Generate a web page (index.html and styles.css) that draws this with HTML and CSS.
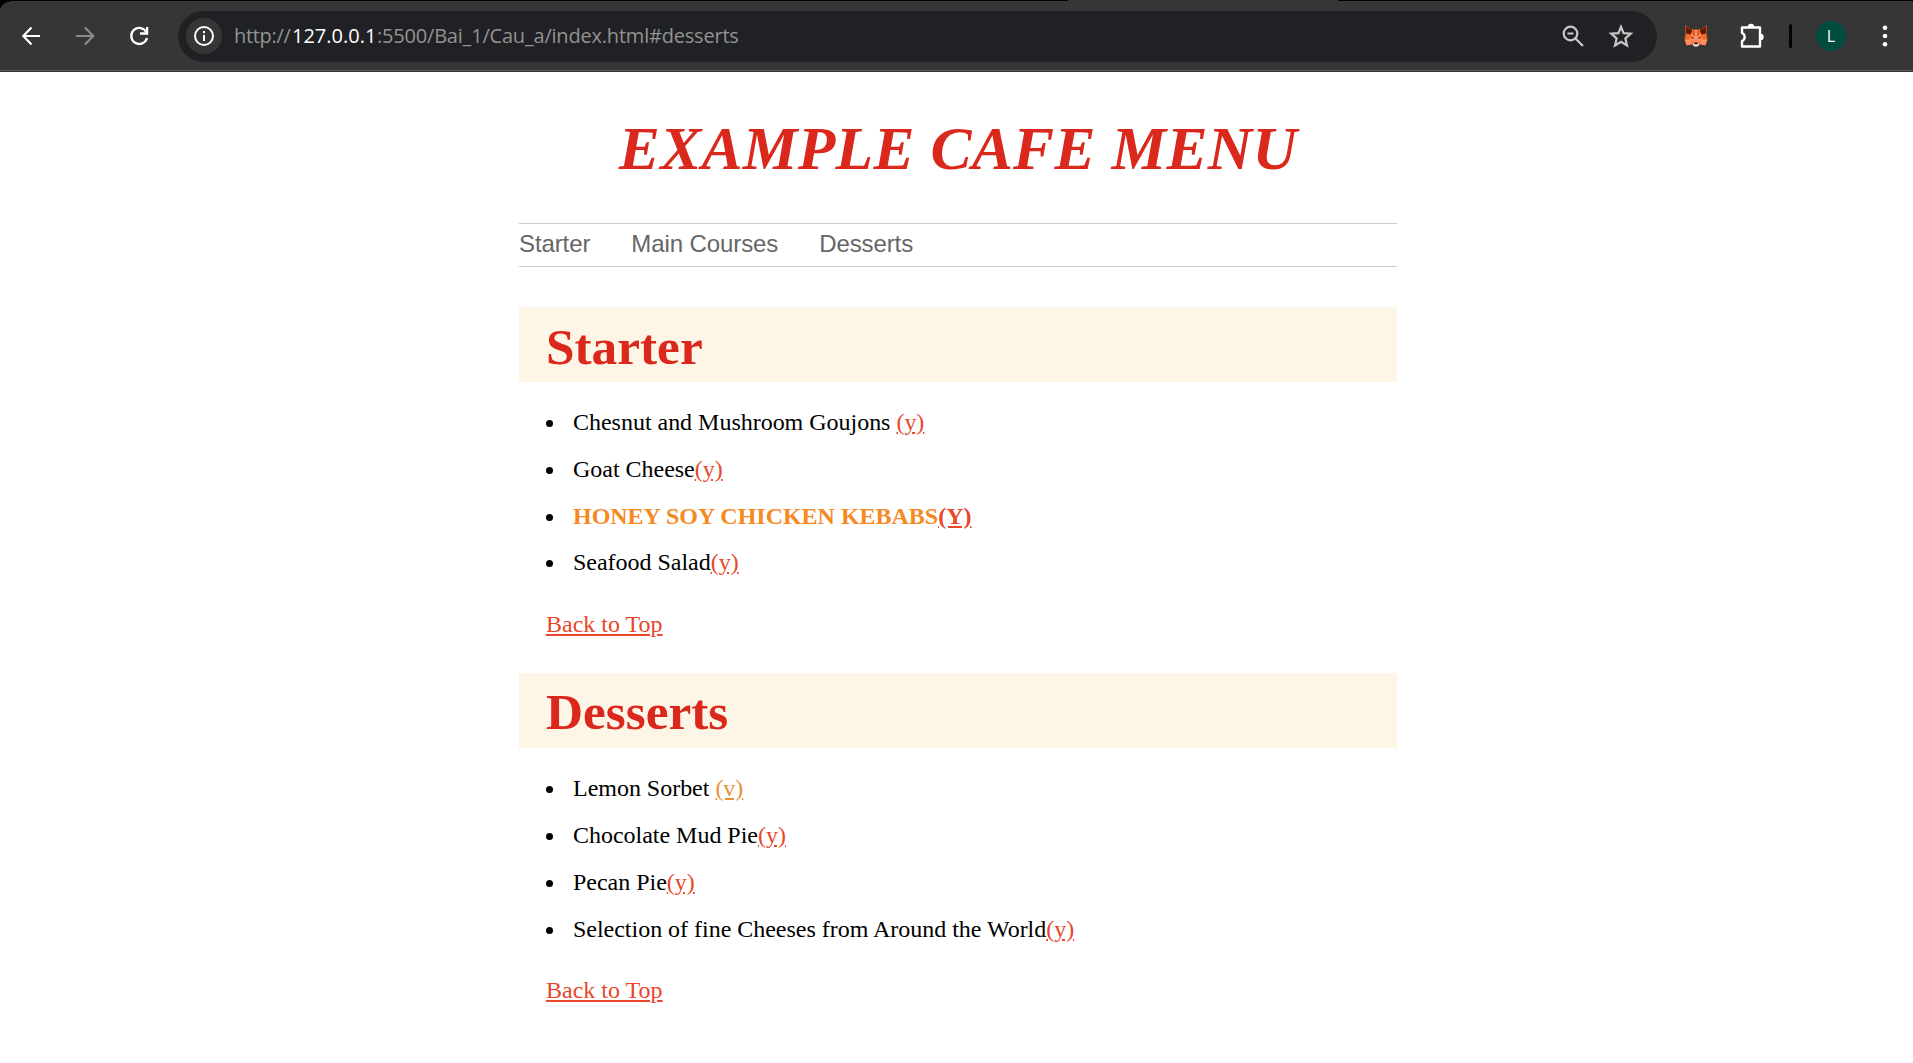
FILE: index.html
```html
<!DOCTYPE html>
<html lang="en">
<head>
<meta charset="utf-8">
<title>Example Cafe Menu</title>
<link rel="stylesheet" href="styles.css">
</head>
<body>
<header class="toolbar">
  <div class="nav-buttons">
    <svg width="24" height="24" viewBox="0 0 24 24" fill="none" stroke="#fff" stroke-width="2.2"><path d="M21 12H4.500M12.500 3.500L4.300 12l8.200 8.500"/></svg>
    <svg width="24" height="24" viewBox="0 0 24 24" fill="none" stroke="#8a8a8a" stroke-width="2.200"><path d="M3 12h17M12 3.500l8.200 8.500L12 20.500"/></svg>
    <svg width="24" height="24" viewBox="0 0 24 24" fill="none" stroke="#fff" stroke-width="2.300"><path d="M19.500 8.500A8 8 0 1 0 20 14"/><path d="M20.100 3v6.500H13"/></svg>
  </div>
  <div class="address">
    <span class="site-info"><svg width="22" height="22" viewBox="0 0 22 22" fill="none" stroke="#fff" stroke-width="2"><circle cx="11" cy="11" r="9"/><path d="M11 10v6M11 6v2.200"/></svg></span>
    <div class="url"><span class="scheme">http://</span><span class="host">127.0.0.1</span><span class="path">:5500/Bai_1/Cau_a/index.html#desserts</span></div>
    <svg class="zoom-icon" width="24" height="24" viewBox="0 0 24 24" fill="none" stroke="#c7c7c7" stroke-width="2.200"><circle cx="9.500" cy="9.500" r="6.800"/><path d="M14.500 14.500l7.500 7.500M6.500 9.500h6"/></svg>
    <svg class="star-icon" width="26" height="26" viewBox="0 0 26 26" fill="none" stroke="#c7c7c7" stroke-width="2.200"><path d="M13 3.800l2.600 6.300 7.200.6-5.400 4.700 1.600 7L13 18.700l-6 3.700 1.600-7-5.400-4.700 7.200-.6z"/></svg>
  </div>
  <svg class="fox" width="24" height="24" viewBox="0 0 24 24">
    <path fill="#f6692c" d="M1 1.200l6.500 4.300h9L23 1.200l-.6 8.300 1 6.500-2 5.500-5.400-1.300-2.200 1.800h-3.600L8 20.200l-5.400 1.300L.6 16l1-6.500z"/>
    <path fill="#661800" d="M1.600 2.200l7.200 4.300-1.600 4-4.900-.7zM22.400 2.200l-7.200 4.300 1.600 4 4.900-.7z"/>
    <path fill="#ff8d5d" d="M8.500 6h7l2.500 7-3 5.500H9L6 13zM1 16l6-1 1 5-5.300 1.200zM23 16l-6-1-1 5 5.300 1.200z"/>
    <path fill="#e34807" d="M8.800 6h1.500l.4 6-2-1zM15.200 6h-1.500l-.4 6 2-1z"/>
    <path fill="#3a1c12" d="M6.500 12.300l3.300 1.500-.7 1.200zM17.500 12.300l-3.300 1.500.7 1.200z"/>
    <path fill="#f4e9e2" d="M8.400 19.400h7.200l-1.800 3.100h-3.600z"/>
    <path fill="#32201c" d="M10.300 18.500h3.400l.3 1.800h-4z"/>
  </svg>
  <svg class="puzzle" width="28" height="28" viewBox="0 0 28 28"><path fill="none" stroke="#fff" stroke-width="2.400" stroke-linejoin="round" d="M5 5.500h18v19H5v-5.500c3.600-1.500 3.600-6.500 0-8z"/><path fill="#fff" d="M10.800 5a3.200 3.200 0 0 1 6.400 0zM23.500 11.800a3.200 3.200 0 0 1 0 6.400z"/></svg>
  <span class="divider"></span>
  <span class="avatar">L</span>
  <svg class="more" width="6" height="24" viewBox="0 0 6 24" fill="#fff"><circle cx="3" cy="3.800" r="2.300"/><circle cx="3" cy="12" r="2.300"/><circle cx="3" cy="20.200" r="2.300"/></svg>
  <span class="tab-edge"></span>
</header>
<main class="page">
  <h1>Example Cafe Menu</h1>
  <nav class="menu-nav"><a>Starter</a><a>Main Courses</a><a>Desserts</a></nav>
  <section>
    <h2>Starter</h2>
    <ul>
      <li>Chesnut and Mushroom Goujons <a class="mark">(y)</a></li>
      <li>Goat Cheese<a class="mark">(y)</a></li>
      <li class="special">Honey Soy Chicken Kebabs<a class="mark">(y)</a></li>
      <li>Seafood Salad<a class="mark">(y)</a></li>
    </ul>
    <a class="back">Back to Top</a>
  </section>
  <section>
    <h2>Desserts</h2>
    <ul>
      <li>Lemon Sorbet <a class="mark vegetarian">(v)</a></li>
      <li>Chocolate Mud Pie<a class="mark">(y)</a></li>
      <li>Pecan Pie<a class="mark">(y)</a></li>
      <li>Selection of fine Cheeses from Around the World<a class="mark">(y)</a></li>
    </ul>
    <a class="back">Back to Top</a>
  </section>
</main>
</body>
</html>
```
FILE: styles.css
```css
* { box-sizing: border-box; }
html { background: #fff; }
body {
  margin: 0;
  height: 1063px;
  overflow: hidden;
  font: 24px/28px "Liberation Serif", "Times New Roman", serif;
  color: #000;
}
svg { display: block; flex: none; }

.toolbar {
  position: relative;
  display: flex;
  align-items: center;
  height: 72px;
  padding: 0 25px 0 19px;
  background: linear-gradient(#5f5f5f, #5f5f5f) 0 70px / 100% 1px no-repeat, radial-gradient(circle at 10px 11px, #363636 10px, transparent 10.5px) 0 1px / 10px 10px no-repeat, linear-gradient(#363636, #363636) 10px 1px / 100% 10px no-repeat, linear-gradient(#363636, #363636) 0 11px no-repeat #000;
}
.nav-buttons { display: flex; gap: 30px; width: 159px; }
.address {
  display: flex;
  align-items: center;
  width: 1479px;
  height: 51px;
  padding: 0 23px 0 8px;
  border-radius: 26px;
  background: #202124;
}
.site-info {
  display: grid;
  place-items: center;
  width: 36px;
  height: 36px;
  border-radius: 50%;
  background: #363636;
}
.url {
  flex: 1;
  display: flex;
  margin-left: 12px;
  font: 20px/28px "Open Sans", "Noto Sans", sans-serif;
  letter-spacing: -0.2px;
  color: #939393;
  white-space: nowrap;
}
.scheme { width: 58px; letter-spacing: -0.3px; }
.host { width: 85px; color: #fff; letter-spacing: 0; }
.zoom-icon { margin-right: 23px; }
.fox { margin-left: 27px; }
.puzzle { margin-left: 29px; }
.divider { width: 3px; height: 24px; margin-left: 24px; border-radius: 2px; background: #000; }
.avatar {
  width: 30px;
  height: 30px;
  margin-left: 24px;
  border-radius: 50%;
  background: #004d40;
  color: #fff;
  font: 16px/30px "Open Sans", sans-serif;
  text-align: center;
}
.more { margin-left: 36px; }
.tab-edge { position: absolute; left: 1068px; top: 0; width: 270px; height: 1px; background: #363636; }

.page { width: 878px; margin-left: 519px; }
h1 {
  height: 151px;
  margin: 0;
  padding-top: 42px;
  font-size: 61.5px;
  line-height: 68px;
  font-style: italic;
  letter-spacing: 0.3px;
  text-align: center;
  text-transform: uppercase;
  white-space: nowrap;
  color: #da291c;
}
.menu-nav {
  display: flex;
  gap: 41px;
  height: 44px;
  border: solid #ccc;
  border-width: 1px 0;
  font: 24px/40px "Liberation Sans", Arial, sans-serif;
  letter-spacing: -0.1px;
  color: #666;
}
section { margin-top: 40px; }
section + section { margin-top: 35px; }
h2 {
  height: 75px;
  margin: 0;
  padding-left: 27px;
  background: #fdf5e6;
  color: #da291c;
  font-size: 51.3px;
  line-height: 80px;
}
section + section h2 { line-height: 78px; }
ul {
  margin: 17px 0 24px;
  padding-left: 27px;
  list-style: none;
}
section + section ul { margin-bottom: 23px; }
li { height: 47px; line-height: 47px; letter-spacing: -0.02px; }
li::before {
  content: "";
  display: inline-block;
  width: 7px;
  height: 7px;
  margin-right: 20px;
  border-radius: 50%;
  background: #000;
  vertical-align: 3px;
}
.special { height: 46px; font-weight: bold; text-transform: uppercase; color: #f6891f; }
.mark { color: #e8472b; text-decoration: underline; }
.vegetarian { color: #e69138; }
.back { display: block; margin-left: 27px; color: #e8472b; text-decoration: underline; }
```
